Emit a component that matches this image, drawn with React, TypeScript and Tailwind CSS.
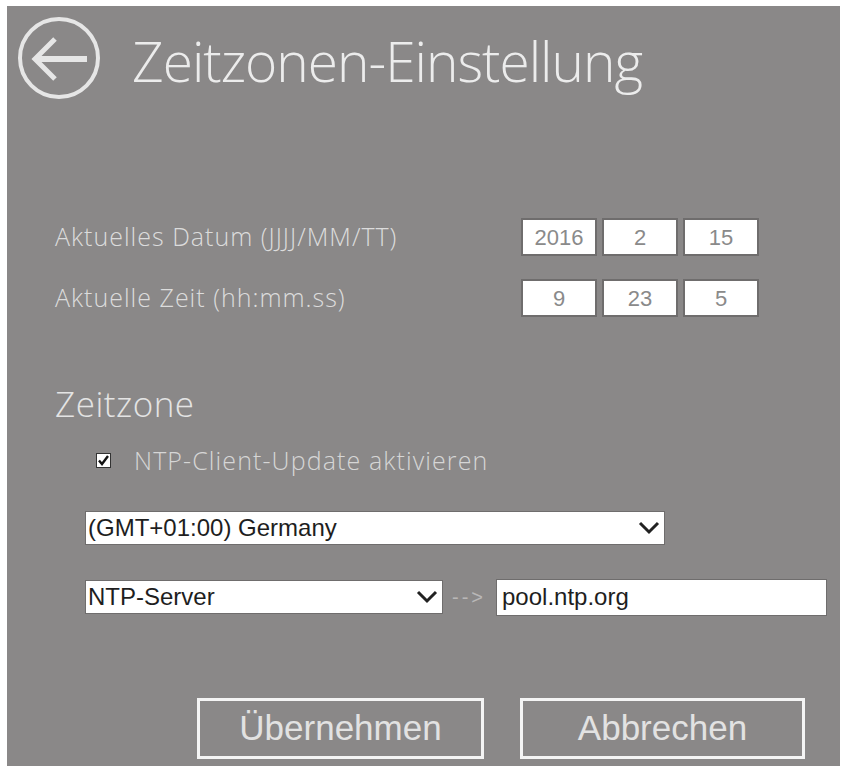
import React from 'react';

const light = { fontFamily: '"Open Sans", "Noto Sans", sans-serif' };
const arial = { fontFamily: '"Liberation Sans", Arial, sans-serif' };

const BackIcon = () => (
  <svg width="84" height="84" viewBox="0 0 84 84" fill="none" stroke="#e6e6e6">
    <circle cx="42" cy="42" r="39" strokeWidth="4" />
    <path d="M70 43 H18" strokeWidth="6" />
    <path d="M38 23 L18 43 L38 63" strokeWidth="5" />
  </svg>
);

const Chevron = () => (
  <svg width="22" height="14" viewBox="0 0 22 14" fill="none" stroke="#222" strokeWidth="3">
    <path d="M2 2 L11 11 L20 2" />
  </svg>
);

const NumBox = ({ value }: { value: string }) => (
  <div
    className="w-[76px] h-[38px] bg-white border-2 border-[#6f6d6d] flex items-center justify-center text-[22px] text-[#8a8a8a]"
    style={arial}
  >
    {value}
  </div>
);

const Field = ({ label, values }: { label: string; values: string[] }) => (
  <div className="flex items-center">
    <span className="w-[466px] text-[25px] font-light text-[#dcdcdc] tracking-[1px]" style={light}>
      {label}
    </span>
    <div className="flex gap-[5px]">
      {values.map((v, i) => (
        <NumBox key={i} value={v} />
      ))}
    </div>
  </div>
);

const Select = ({ value, width }: { value: string; width: string }) => (
  <div
    className={`${width} h-[34px] bg-white border border-[#6f6d6d] flex items-center justify-between pl-[2px] pr-[4px] text-[24px] text-[#1e1e1e]`}
    style={arial}
  >
    <span>{value}</span>
    <Chevron />
  </div>
);

export default function App() {
  return (
    <div className="w-[848px] h-[773px] bg-white pt-[6px] pl-[7px]">
      <div className="w-[833px] h-[760px] bg-[#8a8888] flex flex-col">
        {/* header */}
        <div className="flex items-center mt-[10px] ml-[10px]">
          <BackIcon />
          <h1 className="ml-[31px] mt-[4px] text-[55px] font-light text-[#ececec] tracking-[-1px] leading-none" style={light}>
            Zeitzonen-Einstellung
          </h1>
        </div>

        {/* date and time */}
        <div className="mt-[118px] ml-[48px] flex flex-col gap-[23px]">
          <Field label="Aktuelles Datum (JJJJ/MM/TT)" values={['2016', '2', '15']} />
          <Field label="Aktuelle Zeit (hh:mm.ss)" values={['9', '23', '5']} />
        </div>

        {/* time zone */}
        <h2 className="mt-[69px] ml-[48px] text-[35px] font-light text-[#e4e4e4] tracking-[0.5px] leading-none" style={light}>
          Zeitzone
        </h2>
        <label className="mt-[21px] ml-[89px] flex items-center">
          <span className="w-[15px] h-[15px] bg-white border border-[#333] flex items-center justify-center">
            <svg width="13" height="13" viewBox="0 0 13 13" fill="none" stroke="#111" strokeWidth="2.4">
              <path d="M2 6.5 L5 10 L11 2" />
            </svg>
          </span>
          <span className="ml-[23px] text-[25px] font-light text-[#d6d6d6] tracking-[1.1px]" style={light}>
            NTP-Client-Update aktivieren
          </span>
        </label>

        <div className="mt-[31px] ml-[78px]">
          <Select value="(GMT+01:00) Germany" width="w-[580px]" />
        </div>

        <div className="mt-[34px] ml-[78px] flex items-center">
          <Select value="NTP-Server" width="w-[358px]" />
          <span className="ml-[9px] text-[20px] text-[#b9b7b7] tracking-[3px]" style={arial}>
            --&gt;
          </span>
          <div
            className="ml-[10px] w-[331px] h-[37px] bg-white border border-[#6f6d6d] flex items-center pl-[5px] text-[24px] text-[#1e1e1e]"
            style={arial}
          >
            pool.ntp.org
          </div>
        </div>

        {/* actions */}
        <div className="mt-[82px] ml-[190px] flex gap-[36px]">
          <button
            className="w-[287px] h-[61px] border-[3px] border-[#f4f4f4] text-[35px] text-[#e2e2e2] flex items-center justify-center"
            style={arial}
          >
            Übernehmen
          </button>
          <button
            className="w-[285px] h-[61px] border-[3px] border-[#f4f4f4] text-[35px] text-[#e2e2e2] flex items-center justify-center"
            style={arial}
          >
            Abbrechen
          </button>
        </div>
      </div>
    </div>
  );
}
